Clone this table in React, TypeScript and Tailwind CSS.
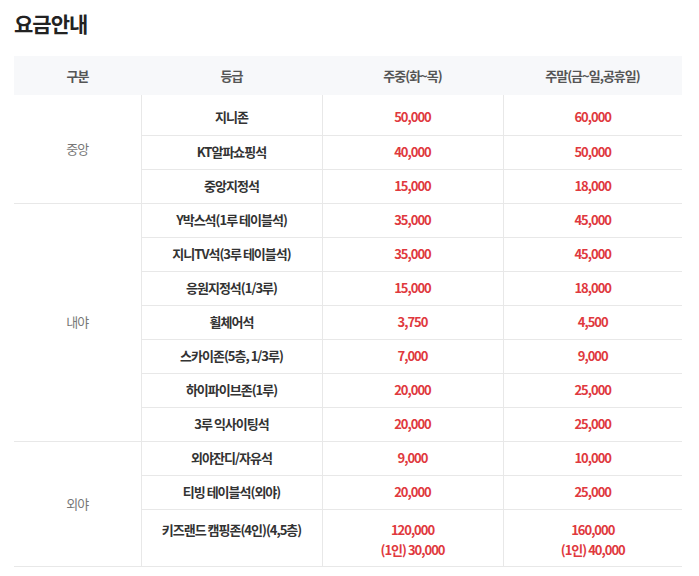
const font = { fontFamily: '"Noto Sans CJK KR", "Noto Sans", sans-serif' }

type Row = { grade: string; weekday: string[]; weekend: string[] }
type Group = { name: string; rows: Row[] }

const groups: Group[] = [
  {
    name: '중앙',
    rows: [
      { grade: '지니존', weekday: ['50,000'], weekend: ['60,000'] },
      { grade: 'KT알파쇼핑석', weekday: ['40,000'], weekend: ['50,000'] },
      { grade: '중앙지정석', weekday: ['15,000'], weekend: ['18,000'] },
    ],
  },
  {
    name: '내야',
    rows: [
      { grade: 'Y박스석(1루 테이블석)', weekday: ['35,000'], weekend: ['45,000'] },
      { grade: '지니TV석(3루 테이블석)', weekday: ['35,000'], weekend: ['45,000'] },
      { grade: '응원지정석(1/3루)', weekday: ['15,000'], weekend: ['18,000'] },
      { grade: '휠체어석', weekday: ['3,750'], weekend: ['4,500'] },
      { grade: '스카이존(5층, 1/3루)', weekday: ['7,000'], weekend: ['9,000'] },
      { grade: '하이파이브존(1루)', weekday: ['20,000'], weekend: ['25,000'] },
      { grade: '3루 익사이팅석', weekday: ['20,000'], weekend: ['25,000'] },
    ],
  },
  {
    name: '외야',
    rows: [
      { grade: '외야잔디/자유석', weekday: ['9,000'], weekend: ['10,000'] },
      { grade: '티빙 테이블석(외야)', weekday: ['20,000'], weekend: ['25,000'] },
      {
        grade: '키즈랜드 캠핑존(4인)(4,5층)',
        weekday: ['120,000', '(1인) 30,000'],
        weekend: ['160,000', '(1인) 40,000'],
      },
    ],
  },
]

export default function App() {
  return (
    <div className="bg-white min-h-[576px] px-[14px] pt-[8px] tracking-[-1px]" style={font}>
      <h2 className="text-[21px] leading-[30px] font-bold text-[#222]">요금안내</h2>
      <table className="mt-[18px] w-[668px] border-collapse table-fixed text-[13px] leading-[20px]">
        <colgroup>
          <col className="w-[127px]" />
          <col className="w-[181px]" />
          <col className="w-[181px]" />
          <col />
        </colgroup>
        <thead>
          <tr className="bg-[#f7f8fa] h-[39px] text-[#555]">
            <th className="font-semibold">구분</th>
            <th className="font-semibold">등급</th>
            <th className="font-semibold">주중(화~목)</th>
            <th className="font-semibold">주말(금~일,공휴일)</th>
          </tr>
        </thead>
        <tbody>
          {groups.map((g, gi) =>
            g.rows.map((r, ri) => {
              const first = gi === 0 && ri === 0
              const multi = r.weekday.length > 1
              const cell = `text-center border-[#e8e8e8] ${
                multi ? 'align-top pt-[10px] pb-[6px]' : first ? 'pt-[5px]' : ''
              }`
              const lastInGroup = ri === g.rows.length - 1
              return (
                <tr
                  key={r.grade}
                  className={`${first ? 'h-[40px]' : 'h-[34px]'} ${lastInGroup ? 'border-b border-[#e8e8e8]' : ''}`}
                >
                  {ri === 0 && (
                    <td rowSpan={g.rows.length} className="text-center text-[#777] border-r border-[#e8e8e8]">
                      {g.name}
                    </td>
                  )}
                  <td className={`${cell} text-[#333] font-semibold border-r ${lastInGroup ? '' : 'border-b'}`}>
                    {r.grade}
                  </td>
                  <td className={`${cell} text-[#e0393e] font-semibold border-r ${lastInGroup ? '' : 'border-b'}`}>
                    {r.weekday.map((t) => (
                      <div key={t}>{t}</div>
                    ))}
                  </td>
                  <td className={`${cell} text-[#e0393e] font-semibold ${lastInGroup ? '' : 'border-b'}`}>
                    {r.weekend.map((t) => (
                      <div key={t}>{t}</div>
                    ))}
                  </td>
                </tr>
              )
            })
          )}
        </tbody>
      </table>
    </div>
  )
}
